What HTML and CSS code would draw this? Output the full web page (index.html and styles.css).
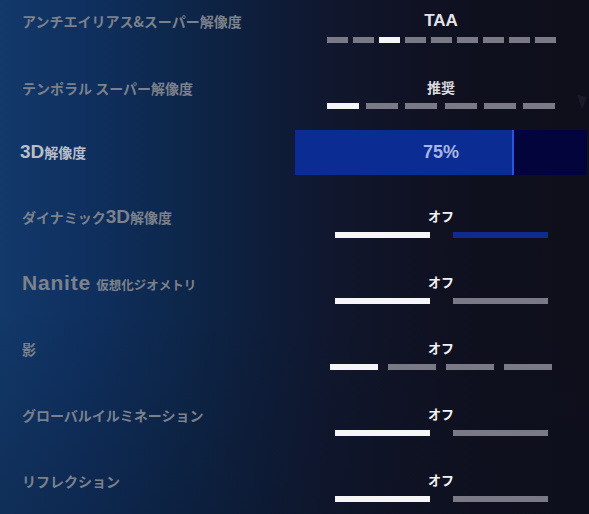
FILE: index.html
```html
<!DOCTYPE html>
<html lang="ja">
<head>
  <meta charset="UTF-8" />
  <title>グラフィック設定</title>
  <link rel="stylesheet" href="styles.css">
</head>
<body>

  <div class="settings">

    <!-- Anti-aliasing -->
    <div class="row row-first">
      <div class="label">アンチエイリアス&amp;スーパー解像度</div>
      <div class="control">
        <div class="value value-big">TAA</div>
        <div class="steps steps-9">
          <span></span><span></span><span class="on"></span><span></span><span></span>
          <span></span><span></span><span></span><span></span>
        </div>
      </div>
    </div>

    <div class="row row-second">
      <div class="label">テンポラル スーパー解像度</div>
      <div class="control">
        <div class="value value-kanji">推奨</div>
        <div class="steps steps-6">
          <span class="on"></span><span></span><span></span>
          <span></span><span></span><span></span>
        </div>
      </div>
    </div>

    <!-- Selected slider row -->
    <div class="row row-slider">
      <div class="label label-active"><b class="latin">3D</b>解像度</div>
      <div class="slider">
        <div class="slider-fill" style="width: 75%;"></div>
        <div class="slider-text">75%</div>
      </div>
    </div>

    <div class="row">
      <div class="label">ダイナミック<b class="latin">3D</b>解像度</div>
      <div class="control">
        <div class="value">オフ</div>
        <div class="steps steps-2">
          <span class="on"></span><span class="blue"></span>
        </div>
      </div>
    </div>

    <div class="row">
      <div class="label"><b class="latin latin-lg">Nanite</b> <span class="small">仮想化ジオメトリ</span></div>
      <div class="control">
        <div class="value">オフ</div>
        <div class="steps steps-2">
          <span class="on"></span><span></span>
        </div>
      </div>
    </div>

    <div class="row">
      <div class="label">影</div>
      <div class="control">
        <div class="value">オフ</div>
        <div class="steps steps-4">
          <span class="on"></span><span></span><span></span><span></span>
        </div>
      </div>
    </div>

    <div class="row">
      <div class="label">グローバルイルミネーション</div>
      <div class="control">
        <div class="value">オフ</div>
        <div class="steps steps-2">
          <span class="on"></span><span></span>
        </div>
      </div>
    </div>

    <div class="row">
      <div class="label">リフレクション</div>
      <div class="control">
        <div class="value">オフ</div>
        <div class="steps steps-2">
          <span class="on"></span><span></span>
        </div>
      </div>
    </div>

  </div>

  <!-- faint scroll hint on the right edge -->
  <svg class="hint" width="12" height="16" viewBox="0 0 12 16">
    <path d="M1 1 L11 3 L6 15 Z" fill="#2a2d40" />
  </svg>

</body>
</html>
```

FILE: styles.css
```css
body {
  margin: 0;
  width: 589px;
  height: 514px;
  overflow: hidden;
  position: relative;
  font-family: "Noto Sans CJK JP", "Liberation Sans", sans-serif;
  background:
    linear-gradient(180deg, rgba(10, 20, 40, 0) 60%, rgba(10, 16, 32, 0.25) 100%),
    linear-gradient(90deg, #12396a 0%, #0f3060 14%, #0d2649 32%, #0e1d3a 45%, #10172e 56%, #101325 68%, #0f101e 82%, #0f0f1b 100%);
}

.settings {
  display: flex;
  flex-direction: column;
}

.row {
  display: grid;
  grid-template-columns: 295px 292px;
  height: 66px;
}

.row-first {
  height: 67px;
}

.row-second {
  height: 63px;
}

.label {
  padding: 11px 0 0 22px;
  font-size: 14px;
  font-weight: 700;
  line-height: 20px;
  color: #7c818c;
  white-space: nowrap;
}

.label-active {
  padding-left: 20px;
  color: #b9bec8;
}

.latin {
  font-family: "Liberation Sans", Arial, sans-serif;
  font-size: 19px;
  font-weight: 700;
}

.latin-lg {
  font-size: 21px;
  letter-spacing: 0.8px;
  margin-right: 2px;
}

.small {
  font-size: 12.5px;
}

.control {
  display: flex;
  flex-direction: column;
  align-items: center;
}

.value {
  margin-top: 10px;
  height: 20px;
  line-height: 20px;
  font-size: 13px;
  font-weight: 700;
  color: #f2f2f4;
}

.value-big {
  margin-top: 11px;
  font-family: "Liberation Sans", Arial, sans-serif;
  font-size: 17px;
  color: #e4e4e8;
}

.value-kanji {
  font-size: 14px;
  color: #dcdce0;
}

.steps {
  display: flex;
  margin-top: 6px;
}

.steps span {
  height: 6px;
  background: #797a85;
}

.steps span.on {
  background: #f6f6f8;
}

.steps span.blue {
  background: #0d2c8e;
}

.steps-9 {
  gap: 5px;
  margin-top: 6px;
}

.steps-9 span {
  width: 21px;
}

.steps-6 {
  gap: 7.4px;
}

.steps-6 span {
  width: 32px;
}

.steps-2 {
  gap: 23px;
}

.steps-2 span {
  width: 95px;
}

.steps-4 {
  gap: 10px;
}

.steps-4 span {
  width: 48px;
}

/* 3D resolution slider */
.row-slider .label {
  padding-top: 12px;
}

.slider {
  position: relative;
  height: 45px;
  background: #03043c;
}

.slider-fill {
  height: 100%;
  background: #0b2c92;
  box-sizing: border-box;
  border-right: 2px solid #2a55d8;
}

.slider-text {
  position: absolute;
  inset: 0;
  text-align: center;
  line-height: 45px;
  font-family: "Liberation Sans", Arial, sans-serif;
  font-size: 18px;
  font-weight: 700;
  color: #a9b5e2;
}

.hint {
  position: absolute;
  left: 576px;
  top: 94px;
  opacity: 0.4;
}
```
